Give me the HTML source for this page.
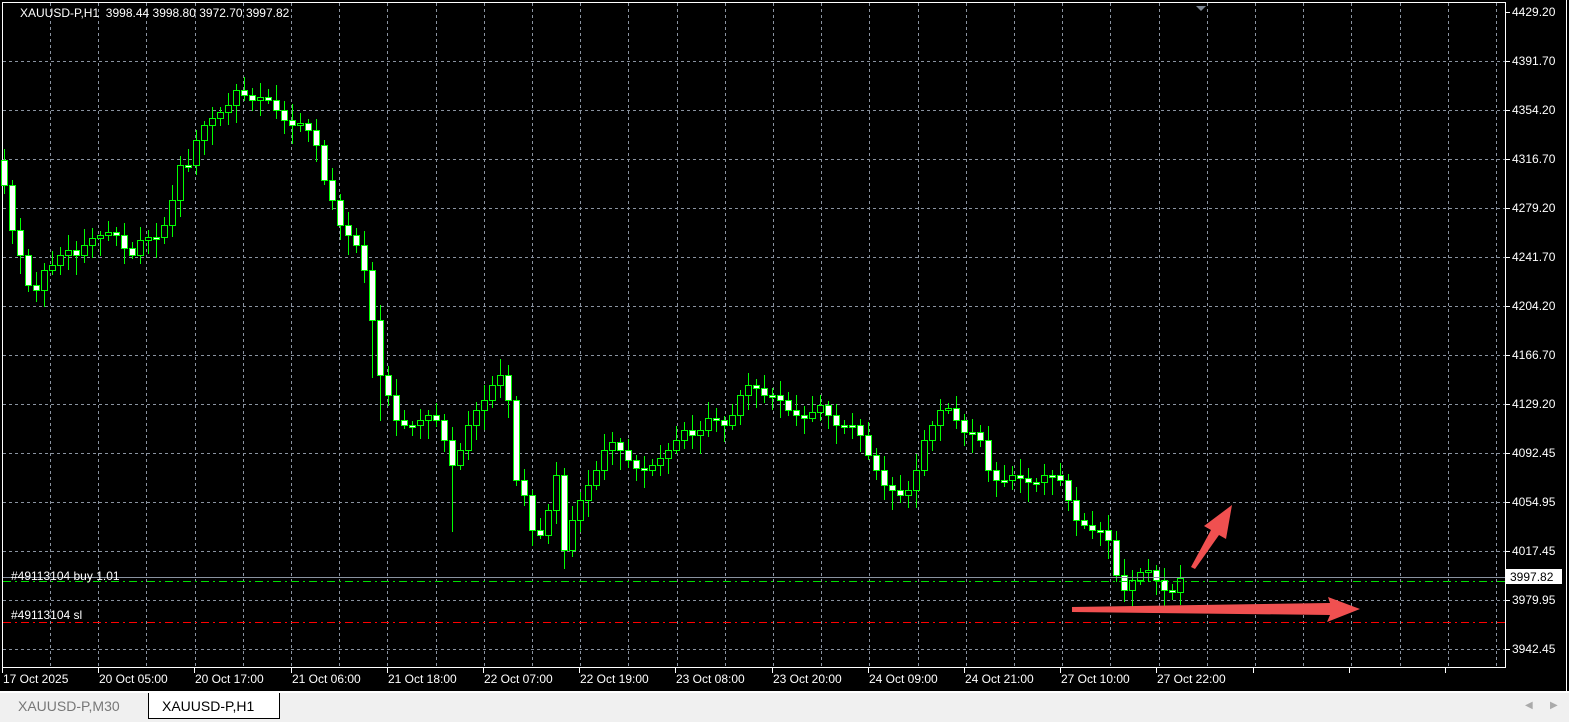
<!DOCTYPE html>
<html><head><meta charset="utf-8"><style>
html,body{margin:0;padding:0;background:#000;width:1569px;height:721px;overflow:hidden;font-family:"Liberation Sans","DejaVu Sans",sans-serif;}
#c{position:absolute;left:0;top:0}
.t{position:absolute;color:#fff;font-size:12px;line-height:14px;white-space:nowrap}
#tabs{position:absolute;left:0;top:692px;width:1569px;height:29px;background:#f0f0f0;border-top:1px solid #fff}
</style></head><body>
<svg id="c" width="1569" height="692" xmlns="http://www.w3.org/2000/svg"></svg>
<div class="t" style="left:20px;top:6px;font-size:12px">XAUUSD-P,H1&nbsp; 3998.44 3998.80 3972.70 3997.82</div>
<div class="t" style="left:11px;top:569px">#49113104 buy 1.01</div>
<div class="t" style="left:11px;top:608px">#49113104 sl</div>
<div id="ax"></div>
<div id="tabs">
<div style="position:absolute;left:18px;top:5px;font-size:14px;color:#777">XAUUSD-P,M30</div>
<div style="position:absolute;left:148px;top:0;width:130px;height:25px;background:#fff;border:1px solid #000;border-top:none"><div style="position:absolute;left:13px;top:5px;font-size:14px;color:#000">XAUUSD-P,H1</div></div>
<div style="position:absolute;left:1525px;top:7px;font-size:10px;color:#aaa">◀</div>
<div style="position:absolute;left:1550px;top:7px;font-size:10px;color:#aaa">▶</div>
</div>
<script>
(function(){
var s=document.getElementById('c'),h='';
function L(x1,y1,x2,y2,c,d,w){h+='<line x1="'+x1+'" y1="'+y1+'" x2="'+x2+'" y2="'+y2+'" stroke="'+c+'" stroke-width="'+(w||1)+'"'+(d?' stroke-dasharray="'+d+'"':'')+'/>';}
for(var x=50;x<1505;x+=48.2)L(Math.round(x)+.5,3,Math.round(x)+.5,666,'#8a93a0','3,3');
var labs=['4429.20','4391.70','4354.20','4316.70','4279.20','4241.70','4204.20','4166.70','4129.20','4092.45','4054.95','4017.45','3979.95','3942.45'];
var ax='';
for(var i=0;i<14;i++){var y=Math.round(12+i*49.0);if(i>0)L(3,y+.5,1505,y+.5,'#8a93a0','3,3');L(1505,y+.5,1510,y+.5,'#fff');
ax+='<div class="t" style="left:1512px;top:'+(y-7)+'px">'+labs[i]+'</div>';}
var tl=['17 Oct 2025','20 Oct 05:00','20 Oct 17:00','21 Oct 06:00','21 Oct 18:00','22 Oct 07:00','22 Oct 19:00','23 Oct 08:00','23 Oct 20:00','24 Oct 09:00','24 Oct 21:00','27 Oct 10:00','27 Oct 22:00'];
for(var i=0;i<13;i++){var x=Math.round(2+i*96.2);L(x+.5,667,x+.5,673,'#fff');ax+='<div class="t" style="left:'+(x+1)+'px;top:672px">'+tl[i]+'</div>';}
for(var i=13;i<16;i++){var x=Math.round(2+i*96.2);L(x+.5,667,x+.5,673,'#fff');}
document.getElementById('ax').innerHTML=ax;
L(2.5,3,2.5,667,'#fff');L(2,667.5,1506,667.5,'#fff');L(1505.5,3,1505.5,667,'#fff');L(2,2.5,1506,2.5,'#fff');
L(1566.5,0,1566.5,692,'#fff');L(0,691.5,1569,691.5,'#fff');
var c=[160,185,230,255,285,290,270,265,255,250,255,245,238,235,232,235,248,255,240,237,237,225,200,165,165,140,125,118,112,105,90,95,100,97,100,110,120,125,123,130,145,180,200,225,235,245,270,320,375,395,420,425,425,420,415,420,440,465,450,425,410,400,385,375,400,480,495,530,535,510,475,550,520,500,485,470,450,442,450,460,468,470,465,458,450,440,430,435,430,418,420,425,415,395,385,388,395,395,400,410,415,418,412,405,415,425,425,425,435,455,470,485,490,495,490,470,440,425,410,408,420,432,432,440,470,480,480,475,478,482,482,475,475,480,500,520,525,530,530,540,575,590,580,572,570,580,590,592,578];
for(var i=1;i<c.length;i++){var x=4+(i-1)*8,o=c[i-1],cl=c[i];var tp=Math.min(o,cl),bt=Math.max(o,cl);if(bt-tp<2)bt=tp+2;
var wt=tp-4-((i*7)%13),wb=bt+4+((i*5)%17);
if(i==47||i==48)wb+=40;if(i==57)wb+=50;
L(x+.5,wt,x+.5,wb,'#00ff00');
var bull=cl<o;h+='<rect x="'+(x-2.5)+'" y="'+(tp+.5)+'" width="6" height="'+(bt-tp)+'" fill="'+(bull?'#000':'#fff')+'" stroke="#00ff00" stroke-width="1"/>';}
L(3,577.5,1505,577.5,'#8a93a0');
L(3,581.5,1505,581.5,'#00e000','8,4,2,4');
L(3,622.5,1505,622.5,'#ff0000','8,4,2,4');
h+='<rect x="1506" y="569" width="56" height="15" fill="#fff"/><text x="1510" y="581" font-size="12" font-family="Liberation Sans" fill="#000">3997.82</text>';
h+='<polygon points="1196,6 1206,6 1201,11" fill="#7d8794"/>';
h+='<polygon points="1191,567 1211,530 1204,526 1232,505 1226,539 1219,535 1195,569" fill="#f05050"/>';
h+='<polygon points="1072,607 1330,603 1328,597 1360,609 1327,622 1330,615 1072,612" fill="#f05050"/>';
s.innerHTML=h;
})();
</script>
</body></html>
